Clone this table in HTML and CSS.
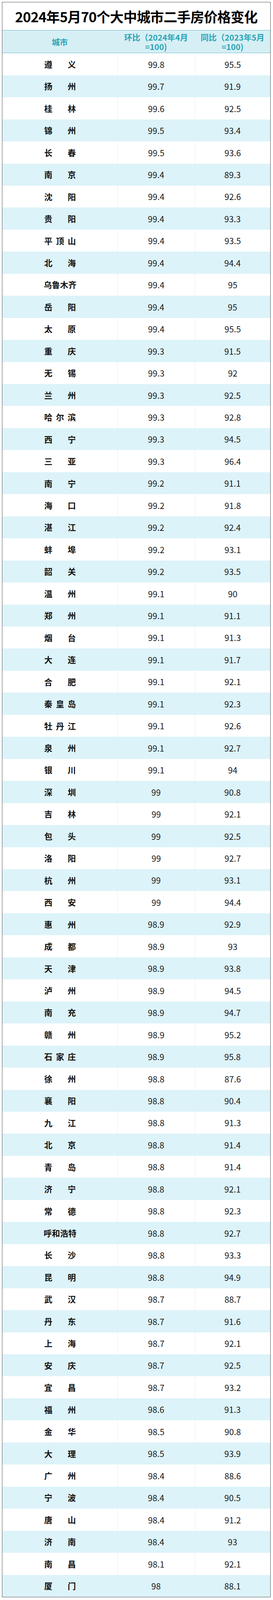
FILE: index.html
```html
<!DOCTYPE html>
<html lang="zh-CN">
<head>
<meta charset="utf-8">
<title>2024年5月70个大中城市二手房价格变化</title>
<link rel="stylesheet" href="styles.css">
</head>
<body>
<div class="sheet">
  <h1 class="title">2024年5月70个大中城市二手房价格变化</h1>
  <div class="head">
    <div class="hc">城市</div><div class="hc">环比（2024年4月=100)</div><div class="hc">同比（2023年5月=100)</div>
  </div>
  <div class="rows">
    <div class="row"><div class="c"><span class="city">遵义</span></div><div class="c">99.8</div><div class="c">95.5</div></div>
    <div class="row"><div class="c"><span class="city">扬州</span></div><div class="c">99.7</div><div class="c">91.9</div></div>
    <div class="row"><div class="c"><span class="city">桂林</span></div><div class="c">99.6</div><div class="c">92.5</div></div>
    <div class="row"><div class="c"><span class="city">锦州</span></div><div class="c">99.5</div><div class="c">93.4</div></div>
    <div class="row"><div class="c"><span class="city">长春</span></div><div class="c">99.5</div><div class="c">93.6</div></div>
    <div class="row"><div class="c"><span class="city">南京</span></div><div class="c">99.4</div><div class="c">89.3</div></div>
    <div class="row"><div class="c"><span class="city">沈阳</span></div><div class="c">99.4</div><div class="c">92.6</div></div>
    <div class="row"><div class="c"><span class="city">贵阳</span></div><div class="c">99.4</div><div class="c">93.3</div></div>
    <div class="row"><div class="c"><span class="city">平顶山</span></div><div class="c">99.4</div><div class="c">93.5</div></div>
    <div class="row"><div class="c"><span class="city">北海</span></div><div class="c">99.4</div><div class="c">94.4</div></div>
    <div class="row"><div class="c"><span class="city">乌鲁木齐</span></div><div class="c">99.4</div><div class="c">95</div></div>
    <div class="row"><div class="c"><span class="city">岳阳</span></div><div class="c">99.4</div><div class="c">95</div></div>
    <div class="row"><div class="c"><span class="city">太原</span></div><div class="c">99.4</div><div class="c">95.5</div></div>
    <div class="row"><div class="c"><span class="city">重庆</span></div><div class="c">99.3</div><div class="c">91.5</div></div>
    <div class="row"><div class="c"><span class="city">无锡</span></div><div class="c">99.3</div><div class="c">92</div></div>
    <div class="row"><div class="c"><span class="city">兰州</span></div><div class="c">99.3</div><div class="c">92.5</div></div>
    <div class="row"><div class="c"><span class="city">哈尔滨</span></div><div class="c">99.3</div><div class="c">92.8</div></div>
    <div class="row"><div class="c"><span class="city">西宁</span></div><div class="c">99.3</div><div class="c">94.5</div></div>
    <div class="row"><div class="c"><span class="city">三亚</span></div><div class="c">99.3</div><div class="c">96.4</div></div>
    <div class="row"><div class="c"><span class="city">南宁</span></div><div class="c">99.2</div><div class="c">91.1</div></div>
    <div class="row"><div class="c"><span class="city">海口</span></div><div class="c">99.2</div><div class="c">91.8</div></div>
    <div class="row"><div class="c"><span class="city">湛江</span></div><div class="c">99.2</div><div class="c">92.4</div></div>
    <div class="row"><div class="c"><span class="city">蚌埠</span></div><div class="c">99.2</div><div class="c">93.1</div></div>
    <div class="row"><div class="c"><span class="city">韶关</span></div><div class="c">99.2</div><div class="c">93.5</div></div>
    <div class="row"><div class="c"><span class="city">温州</span></div><div class="c">99.1</div><div class="c">90</div></div>
    <div class="row"><div class="c"><span class="city">郑州</span></div><div class="c">99.1</div><div class="c">91.1</div></div>
    <div class="row"><div class="c"><span class="city">烟台</span></div><div class="c">99.1</div><div class="c">91.3</div></div>
    <div class="row"><div class="c"><span class="city">大连</span></div><div class="c">99.1</div><div class="c">91.7</div></div>
    <div class="row"><div class="c"><span class="city">合肥</span></div><div class="c">99.1</div><div class="c">92.1</div></div>
    <div class="row"><div class="c"><span class="city">秦皇岛</span></div><div class="c">99.1</div><div class="c">92.3</div></div>
    <div class="row"><div class="c"><span class="city">牡丹江</span></div><div class="c">99.1</div><div class="c">92.6</div></div>
    <div class="row"><div class="c"><span class="city">泉州</span></div><div class="c">99.1</div><div class="c">92.7</div></div>
    <div class="row"><div class="c"><span class="city">银川</span></div><div class="c">99.1</div><div class="c">94</div></div>
    <div class="row"><div class="c"><span class="city">深圳</span></div><div class="c">99</div><div class="c">90.8</div></div>
    <div class="row"><div class="c"><span class="city">吉林</span></div><div class="c">99</div><div class="c">92.1</div></div>
    <div class="row"><div class="c"><span class="city">包头</span></div><div class="c">99</div><div class="c">92.5</div></div>
    <div class="row"><div class="c"><span class="city">洛阳</span></div><div class="c">99</div><div class="c">92.7</div></div>
    <div class="row"><div class="c"><span class="city">杭州</span></div><div class="c">99</div><div class="c">93.1</div></div>
    <div class="row"><div class="c"><span class="city">西安</span></div><div class="c">99</div><div class="c">94.4</div></div>
    <div class="row"><div class="c"><span class="city">惠州</span></div><div class="c">98.9</div><div class="c">92.9</div></div>
    <div class="row"><div class="c"><span class="city">成都</span></div><div class="c">98.9</div><div class="c">93</div></div>
    <div class="row"><div class="c"><span class="city">天津</span></div><div class="c">98.9</div><div class="c">93.8</div></div>
    <div class="row"><div class="c"><span class="city">泸州</span></div><div class="c">98.9</div><div class="c">94.5</div></div>
    <div class="row"><div class="c"><span class="city">南充</span></div><div class="c">98.9</div><div class="c">94.7</div></div>
    <div class="row"><div class="c"><span class="city">赣州</span></div><div class="c">98.9</div><div class="c">95.2</div></div>
    <div class="row"><div class="c"><span class="city">石家庄</span></div><div class="c">98.9</div><div class="c">95.8</div></div>
    <div class="row"><div class="c"><span class="city">徐州</span></div><div class="c">98.8</div><div class="c">87.6</div></div>
    <div class="row"><div class="c"><span class="city">襄阳</span></div><div class="c">98.8</div><div class="c">90.4</div></div>
    <div class="row"><div class="c"><span class="city">九江</span></div><div class="c">98.8</div><div class="c">91.3</div></div>
    <div class="row"><div class="c"><span class="city">北京</span></div><div class="c">98.8</div><div class="c">91.4</div></div>
    <div class="row"><div class="c"><span class="city">青岛</span></div><div class="c">98.8</div><div class="c">91.4</div></div>
    <div class="row"><div class="c"><span class="city">济宁</span></div><div class="c">98.8</div><div class="c">92.1</div></div>
    <div class="row"><div class="c"><span class="city">常德</span></div><div class="c">98.8</div><div class="c">92.3</div></div>
    <div class="row"><div class="c"><span class="city">呼和浩特</span></div><div class="c">98.8</div><div class="c">92.7</div></div>
    <div class="row"><div class="c"><span class="city">长沙</span></div><div class="c">98.8</div><div class="c">93.3</div></div>
    <div class="row"><div class="c"><span class="city">昆明</span></div><div class="c">98.8</div><div class="c">94.9</div></div>
    <div class="row"><div class="c"><span class="city">武汉</span></div><div class="c">98.7</div><div class="c">88.7</div></div>
    <div class="row"><div class="c"><span class="city">丹东</span></div><div class="c">98.7</div><div class="c">91.6</div></div>
    <div class="row"><div class="c"><span class="city">上海</span></div><div class="c">98.7</div><div class="c">92.1</div></div>
    <div class="row"><div class="c"><span class="city">安庆</span></div><div class="c">98.7</div><div class="c">92.5</div></div>
    <div class="row"><div class="c"><span class="city">宜昌</span></div><div class="c">98.7</div><div class="c">93.2</div></div>
    <div class="row"><div class="c"><span class="city">福州</span></div><div class="c">98.6</div><div class="c">91.3</div></div>
    <div class="row"><div class="c"><span class="city">金华</span></div><div class="c">98.5</div><div class="c">90.8</div></div>
    <div class="row"><div class="c"><span class="city">大理</span></div><div class="c">98.5</div><div class="c">93.9</div></div>
    <div class="row"><div class="c"><span class="city">广州</span></div><div class="c">98.4</div><div class="c">88.6</div></div>
    <div class="row"><div class="c"><span class="city">宁波</span></div><div class="c">98.4</div><div class="c">90.5</div></div>
    <div class="row"><div class="c"><span class="city">唐山</span></div><div class="c">98.4</div><div class="c">91.2</div></div>
    <div class="row"><div class="c"><span class="city">济南</span></div><div class="c">98.4</div><div class="c">93</div></div>
    <div class="row"><div class="c"><span class="city">南昌</span></div><div class="c">98.1</div><div class="c">92.1</div></div>
    <div class="row"><div class="c"><span class="city">厦门</span></div><div class="c">98</div><div class="c">88.1</div></div>
  </div>
</div>
</body>
</html>
```

FILE: styles.css
```css
html, body {
  margin: 0;
  padding: 0;
  background: #ffffff;
}

body {
  font-family: "Noto Sans CJK SC", "Noto Sans", sans-serif;
  color: #111;
}

.sheet {
  box-sizing: border-box;
  width: 687px;
  margin: 4.9px 0 0 5px;
  border: 1.5px solid #555;
  background: #fff;
}

.title {
  margin: 0;
  height: 71.1px;
  line-height: 71px;
  font-size: 35px;
  font-weight: 700;
  text-align: center;
  color: #000;
  letter-spacing: -0.7px;
}

.head,
.row {
  display: grid;
  grid-template-columns: 294px 198px 1fr;
}

.head {
  box-sizing: border-box;
  height: 59.25px;
  background: #d6eff5;
  border-top: 1.5px solid #6ab9c5;
  border-bottom: 1.5px solid #6ab9c5;
}

.hc {
  display: flex;
  align-items: center;
  justify-content: center;
  padding: 0 10px;
  color: #2aa3b3;
  font-size: 20.5px;
  line-height: 24px;
  font-weight: 700;
  text-align: center;
}

.row {
  height: 56.46px;
}

.c {
  display: flex;
  align-items: center;
  justify-content: center;
  font-size: 21.5px;
  color: #1a1a1a;
  line-height: 1;
}

.row:nth-child(odd) {
  background: #ffffff;
}

.row:nth-child(odd) .c + .c {
  border-left: 1px solid #ebebeb;
}

.row:nth-child(even) {
  background: #dcf3f9;
}

.city {
  display: inline-block;
  min-width: 81px;
  text-align: justify;
  text-align-last: justify;
  font-weight: 700;
  font-size: 21px;
  color: #111;
  margin-left: 1px;
}
```
